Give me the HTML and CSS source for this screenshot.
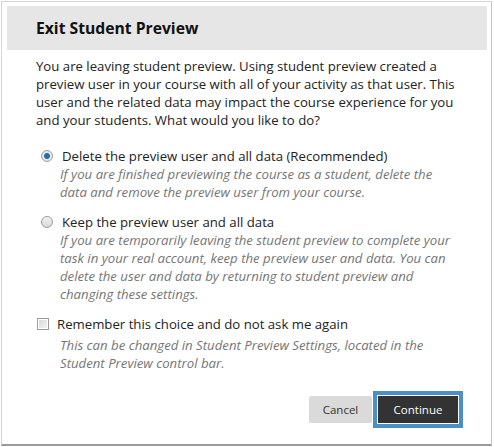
FILE: index.html
```html
<!DOCTYPE html>
<html lang="en">
<head>
    <meta charset="UTF-8">
    <meta name="viewport" content="width=device-width, initial-scale=1.0">
    <title>Exit Student Preview</title>
    <link rel="stylesheet" href="styles.css">
</head>
<body>
    <div class="dialog">
        <div class="dialog-header">
            <h1>Exit Student Preview</h1>
        </div>

        <div class="dialog-body">
            <p class="intro">You are leaving student preview. Using student preview created a preview user in your course with all of your activity as that user. This user and the related data may impact the course experience for you and your students. What would you like to do?</p>

            <div class="option">
                <label class="option-label">
                    <input type="radio" name="choice" checked>
                    <span>Delete the preview user and all data (Recommended)</span>
                </label>
                <p class="option-desc">If you are finished previewing the course as a student, delete the data and remove the preview user from your course.</p>
            </div>

            <div class="option">
                <label class="option-label">
                    <input type="radio" name="choice">
                    <span>Keep the preview user and all data</span>
                </label>
                <p class="option-desc">If you are temporarily leaving the student preview to complete your task in your real account, keep the preview user and data. You can delete the user and data by returning to student preview and changing these settings.</p>
            </div>

            <div class="option remember">
                <label class="option-label">
                    <input type="checkbox">
                    <span>Remember this choice and do not ask me again</span>
                </label>
                <p class="option-desc">This can be changed in Student Preview Settings, located in the Student Preview control bar.</p>
            </div>
        </div>

        <div class="dialog-footer">
            <button class="btn btn-cancel">Cancel</button>
            <button class="btn btn-continue">Continue</button>
        </div>
    </div>
</body>
</html>
```

FILE: styles.css
```css
body {
    margin: 0;
    background: #fff;
    font-family: "Open Sans", "Liberation Sans", sans-serif;
    color: #222;
}

.dialog {
    width: 489px;
    height: 442px;
    margin: 1px 0 0 1px;
    border: 1px solid #d4d4d4;
    border-bottom: 2px solid #9a9a9a;
    border-right-color: #c4c4c4;
    background: #fff;
    box-sizing: content-box;
}

.dialog-header {
    margin: 4px 4px 0 5px;
    height: 44px;
    background: #e6e6e6;
    display: flex;
    align-items: center;
}

.dialog-header h1 {
    margin: 0 0 0 29px;
    font-size: 15.7px;
    font-weight: 700;
    color: #111;
}

.dialog-body {
    padding: 7px 31px 0 34px;
    font-size: 13.2px;
    line-height: 18px;
}

.intro {
    margin: 0 0 18px;
}

.option {
    margin-bottom: 12px;
}

.option-label {
    display: flex;
    align-items: center;
    gap: 9px;
    padding-left: 5px;
}

.option-desc {
    margin: 0 0 0 24px;
    font-style: italic;
    color: #757575;
}

input[type="radio"] {
    appearance: none;
    margin: 0;
    width: 12px;
    height: 12px;
    border-radius: 50%;
    border: 1px solid #9c9c9c;
    background: linear-gradient(#f2f2f2, #d8d8d8);
    flex: none;
}

input[type="radio"]:checked {
    background: radial-gradient(circle, #1f6fb0 0, #1f6fb0 2.5px, #e8e8e8 3.5px, #e8e8e8 100%);
}

.remember .option-label {
    padding-left: 1px;
    gap: 8px;
}

.remember .option-desc {
    margin-top: 3px;
}

input[type="checkbox"] {
    appearance: none;
    margin: 0;
    width: 12px;
    height: 12px;
    border: 1px solid #9c9c9c;
    background: linear-gradient(135deg, #d6d6d6, #f6f6f6);
    box-shadow: inset 0 0 0 1px #fff;
    flex: none;
}

.dialog-footer {
    display: flex;
    justify-content: flex-end;
    gap: 6px;
    padding: 12px 33px 0 0;
}

.btn {
    font-family: inherit;
    font-size: 11.5px;
    height: 27px;
    border: none;
    border-radius: 2px;
    cursor: pointer;
}

.btn-cancel {
    width: 63px;
    background: #dadada;
    color: #333;
}

.btn-continue {
    width: 80px;
    background: #333;
    color: #fff;
    border-radius: 0;
    box-shadow: 0 0 0 1px #fff, 0 0 0 5px #4a8fc6;
}
```
